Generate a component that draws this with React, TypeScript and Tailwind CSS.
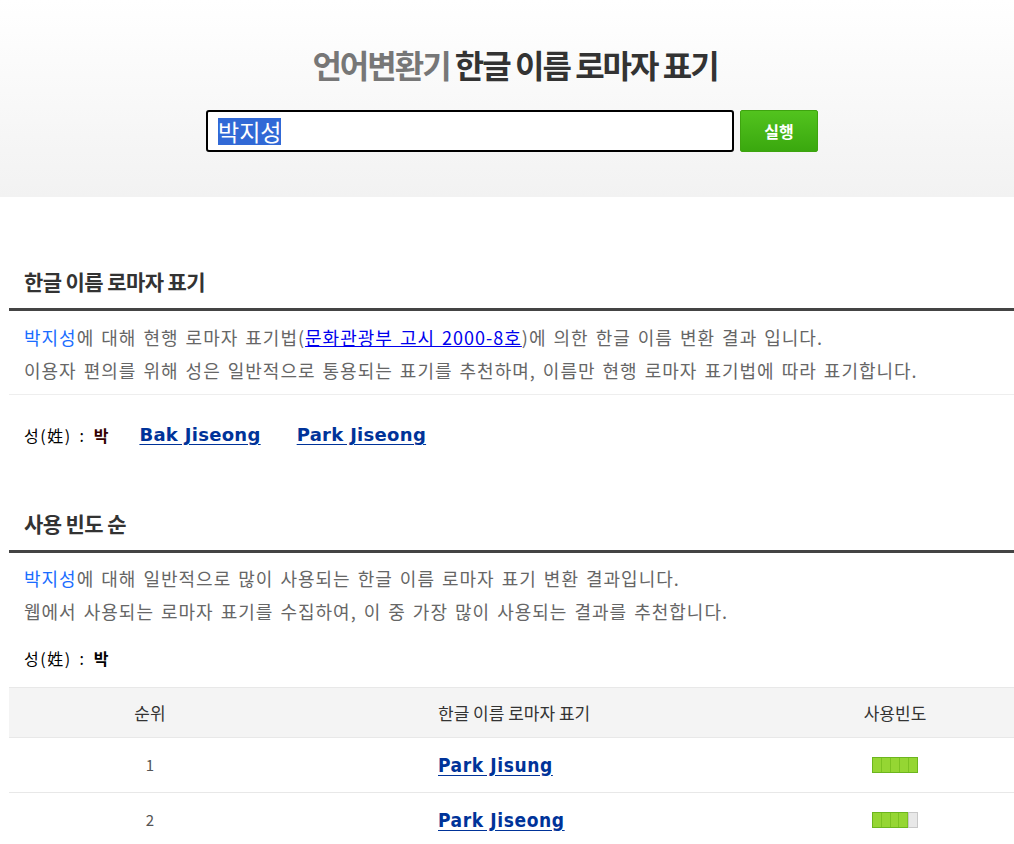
const kr = "font-['Noto_Sans_CJK_KR',sans-serif]";
const body = 'text-[18px] leading-[33px] text-[#666] tracking-[1px] [word-spacing:2px]';

function Bar({ filled }: { filled: number }) {
    return (
        <div className="flex h-4 w-[46px] border border-[#6cb61d] bg-[#8fd12e]">
            {[0, 1, 2, 3, 4].map((i) => (
                <div
                    key={i}
                    className={
                        i < filled
                            ? 'flex-1 border-r border-[#7cc221] bg-[#95d633] last:border-r-0'
                            : 'flex-1 bg-[#e8e8e8] border border-[#c8c8c8] -my-px -mr-px'
                    }
                />
            ))}
        </div>
    );
}

function SectionTitle({ children }: { children: string }) {
    return (
        <div className="pl-[9px]">
            <h2 className={`${kr} pl-[15px] text-[21px] font-bold tracking-[-0.6px] text-[#333] leading-[30px] pb-[12px]`}>
                {children}
            </h2>
            <div className="h-[3px] bg-[#444]" />
        </div>
    );
}

export default function App() {
    const rows = [
        { rank: 1, name: 'Park Jisung', filled: 5 },
        { rank: 2, name: 'Park Jiseong', filled: 4 },
    ];

    return (
        <div className={`${kr} min-h-screen bg-white`}>
            <header className="h-[197px] bg-gradient-to-b from-white to-[#f2f2f2] pt-[41px]">
                <h1 className="pl-[16px] text-center text-[32px] font-bold tracking-[-2px] leading-[46px]">
                    <span className="text-[#777]">언어변환기</span>{' '}
                    <span className="text-[#333]">한글 이름 로마자 표기</span>
                </h1>
                <div className="mt-[23px] flex justify-center gap-[6px] pl-[10px]">
                    <div className="flex h-[42px] w-[528px] items-center rounded-[3px] border-2 border-black bg-white px-[10px]">
                        <span className="bg-[#3169d6] text-[23px] leading-[27px] text-white">박지성</span>
                    </div>
                    <button className="h-[42px] w-[78px] rounded-[2px] border border-[#3ea40f] bg-gradient-to-b from-[#52c31e] to-[#3aa80e] text-[16px] font-bold text-white">
                        실행
                    </button>
                </div>
            </header>

            <section className="pt-[69px]">
                <SectionTitle>한글 이름 로마자 표기</SectionTitle>
                <div className="pl-[9px]">
                    <div className={`pl-[15px] pt-[10px] pb-[7px] ${body}`}>
                        <p>
                            <span className="text-[#1a6dff]">박지성</span>에 대해 현행 로마자 표기법(
                            <a className="text-[#0000ee] underline">문화관광부 고시 2000-8호</a>)에 의한 한글 이름 변환 결과 입니다.
                        </p>
                        <p>이용자 편의를 위해 성은 일반적으로 통용되는 표기를 추천하며, 이름만 현행 로마자 표기법에 따라 표기합니다.</p>
                    </div>
                    <div className="h-px bg-[#eee]" />
                    <div className="flex items-center pl-[15px] pt-[26px] text-[16px] leading-[28px] text-black">
                        <span className="tracking-[1.5px] [word-spacing:3px]">성(姓) :&nbsp;</span>
                        <span className="text-[#300] font-bold">박</span>
                        <a className="ml-[31px] font-['DejaVu_Sans',sans-serif] text-[18px] font-bold tracking-[0.3px] text-[#003399] underline underline-offset-[3px]">
                            Bak Jiseong
                        </a>
                        <a className="ml-[36px] font-['DejaVu_Sans',sans-serif] text-[18px] font-bold tracking-[0.3px] text-[#003399] underline underline-offset-[3px]">
                            Park Jiseong
                        </a>
                    </div>
                </div>
            </section>

            <section className="pt-[59px]">
                <SectionTitle>사용 빈도 순</SectionTitle>
                <div className="pl-[9px]">
                    <div className={`pl-[15px] pt-[9px] ${body}`}>
                        <p>
                            <span className="text-[#1a6dff]">박지성</span>에 대해 일반적으로 많이 사용되는 한글 이름 로마자 표기 변환 결과입니다.
                        </p>
                        <p>웹에서 사용되는 로마자 표기를 수집하여, 이 중 가장 많이 사용되는 결과를 추천합니다.</p>
                    </div>
                    <div className="pl-[15px] pt-[16px] text-[16px] leading-[28px] text-black">
                        <span className="tracking-[1.5px] [word-spacing:3px]">성(姓) :&nbsp;</span>
                        <span className="font-bold">박</span>
                    </div>

                    <div className="mt-[15px] border-t border-[#e8e8e8]">
                        <div className="grid h-[50px] grid-cols-[282px_1fr_238px] items-center bg-[#f4f4f4] text-[17px] text-[#333] border-b border-[#e8e8e8]">
                            <div className="text-center">순위</div>
                            <div className="pl-[147px]">한글 이름 로마자 표기</div>
                            <div className="text-center">사용빈도</div>
                        </div>
                        {rows.map((r) => (
                            <div
                                key={r.rank}
                                className="grid h-[55px] grid-cols-[282px_1fr_238px] items-center border-b border-[#e8e8e8]"
                            >
                                <div className="text-center text-[15px] text-[#555]">{r.rank}</div>
                                <div className="pl-[147px]">
                                    <a className="font-['DejaVu_Sans',sans-serif] [font-stretch:condensed] text-[19px] font-bold tracking-[0.6px] text-[#003399] underline underline-offset-[3px]">
                                        {r.name}
                                    </a>
                                </div>
                                <div className="flex justify-center">
                                    <Bar filled={r.filled} />
                                </div>
                            </div>
                        ))}
                    </div>
                </div>
            </section>
        </div>
    );
}
